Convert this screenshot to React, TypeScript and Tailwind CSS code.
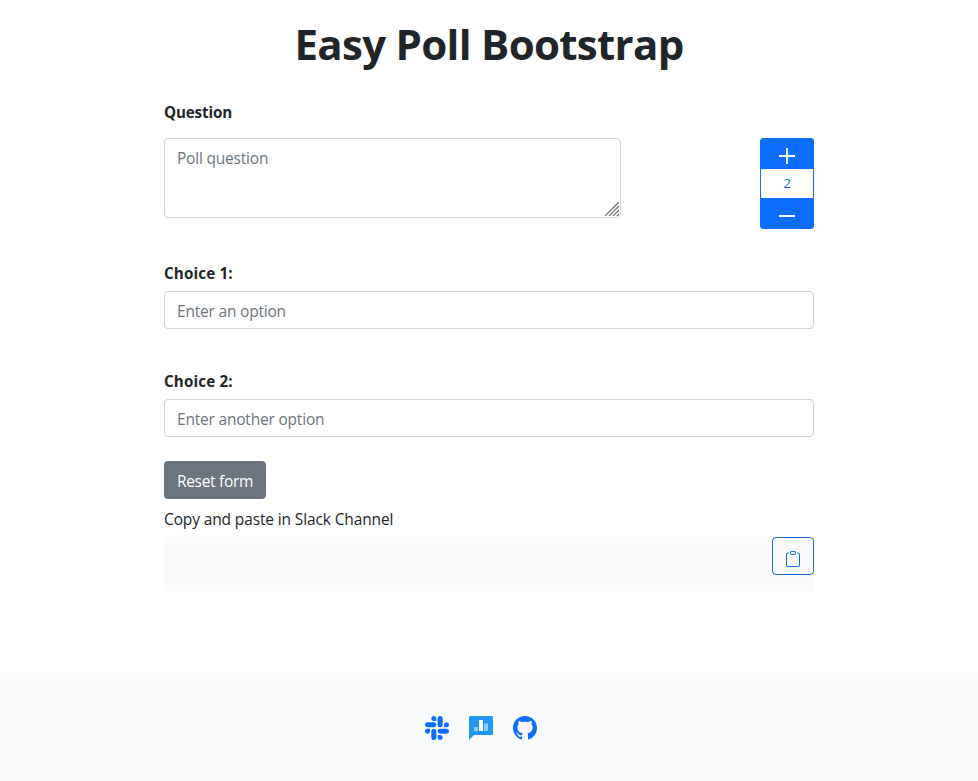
import { BsClipboard, BsGithub, BsSlack } from "react-icons/bs";

const field =
  "block w-full rounded-[4px] border border-[#ced4da] bg-white px-3 text-[15.5px] tracking-[-0.2px] text-[#212529] outline-none placeholder:text-[#6c757d] placeholder:opacity-100";

function Choice({ label, placeholder }: { label: string; placeholder: string }) {
  return (
    <div>
      <label className="block h-[30px] text-[15.2px] leading-6 font-bold tracking-[0.15px]">{label}</label>
      <input className={`${field} h-[38px] pt-0.5`} placeholder={placeholder} />
    </div>
  );
}

export default function App() {
  return (
    <div className="flex h-[781px] flex-col bg-white font-['Open_Sans','Noto_Sans',sans-serif] text-[15.5px] text-[#212529]">
      <main className="mx-auto h-[673px] w-[650px]">
        <h1 className="h-[100px] pt-[15px] text-center text-[42px] leading-[58px] font-bold tracking-[-0.68px] whitespace-nowrap">
          Easy Poll Bootstrap
        </h1>
        <label className="block h-[38px] text-[15.2px] leading-6 font-bold tracking-[-0.15px]">Question</label>
        <div className="flex h-[123px] justify-between">
          <div className="relative h-20 w-[457px]">
            <textarea className={`${field} h-20 resize-none pt-[7px] leading-6`} placeholder="Poll question" />
            <svg className="absolute right-0.5 bottom-0.5" width="14" height="14" viewBox="0 0 14 14" stroke="#777" strokeWidth="1.3">
              <path d="M0 14 14 0M4 14 14 4M8 14l6-6M12 14l2-2" />
            </svg>
          </div>
          <div className="flex h-[91px] w-[54px] flex-col overflow-hidden rounded-[3px] border border-[#0d6efd] bg-[#0d6efd] text-white">
            <button className="flex h-[30px] items-center justify-center pt-1">
              <svg width="16" height="16" viewBox="0 0 16 16" fill="currentColor">
                <path d="M0 7h7V0h2v7h7v2H9v7H7V9H0z" />
              </svg>
            </button>
            <div className="flex h-[29px] items-center justify-center bg-white text-[13.5px] text-[#0d6efd]">2</div>
            <button className="flex h-[30px] items-center justify-center pt-1.5">
              <svg width="16" height="16" viewBox="0 0 16 16" fill="currentColor">
                <path d="M0 7h16v2H0z" />
              </svg>
            </button>
          </div>
        </div>
        <div className="flex flex-col gap-10">
          <Choice label="Choice 1:" placeholder="Enter an option" />
          <Choice label="Choice 2:" placeholder="Enter another option" />
        </div>
        <button className="mt-6 flex h-[38px] w-[102px] items-center justify-center rounded-[4px] bg-[#6c757d] pt-[3px] tracking-[-0.3px] text-white">
          Reset form
        </button>
        <p className="mt-2 h-[30px] leading-6 tracking-[-0.13px]">Copy and paste in Slack Channel</p>
        <div className="flex h-[54px] justify-end bg-[#f8fafb]">
          <button className="flex h-[38px] w-[42px] items-center justify-center rounded-[4px] border border-[#1a70e0] pt-1.5 text-[#1a70e0]">
            <BsClipboard size={16} />
          </button>
        </div>
      </main>
      <footer className="flex h-[108px] justify-center gap-5 bg-[#f8fafb] pt-[43px] pr-4 text-[#0d6efd]">
        <BsSlack size={24} />
        <svg width="24" height="24" viewBox="0 0 24 24">
          <path d="M1.500 0h21Q24 0 24 1.500v16Q24 19 22.500 19H5L0 24V1.500Q0 0 1.500 0Z" fill="#2196f3" />
          <path d="M5 11h4v4H5z" fill="#90caf9" />
          <path d="M10 4h4v11h-4z" fill="#fff" />
          <path d="M15 7.500h4V15h-4z" fill="#90caf9" />
        </svg>
        <BsGithub size={24} />
      </footer>
    </div>
  );
}
